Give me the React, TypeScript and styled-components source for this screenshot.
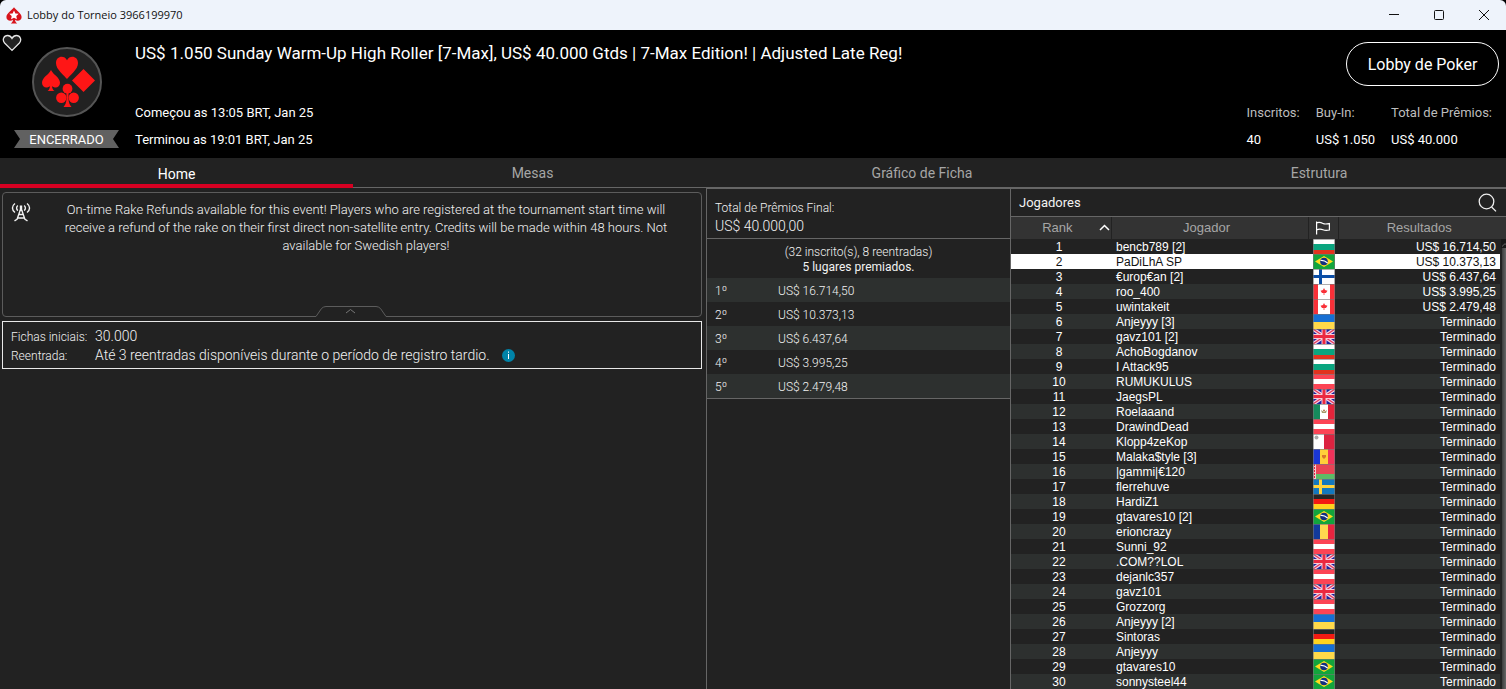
import React from "react";
import styled, { createGlobalStyle } from "styled-components";

const color = {
  panel: "#222222",
  alt: "#2d302f",
  head: "#333333",
  line: "#666666",
  text: "#f2f2f2",
  muted: "#a6a6a6",
  red: "#d70022",
};

const GlobalStyle = createGlobalStyle`
  * { box-sizing: border-box; }
  body {
    margin: 0;
    background: #000;
    color: ${color.text};
    font: 400 13px/18px Roboto, sans-serif;
  }
  button { font: inherit; color: inherit; background: none; border: 0; padding: 0; cursor: pointer; }
  h1, h2, p, dl, dd, dt { margin: 0; font-weight: inherit; }
  svg { display: block; }
`;

const Window = styled.div`
  display: flex;
  flex-direction: column;
  min-height: 100vh;
`;

/* Title bar */

const TitleBar = styled.div`
  display: flex;
  align-items: center;
  height: 30px;
  padding-left: 6px;
  gap: 5px;
  background: #eef3fb;
  color: #111;
  border-radius: 6px 6px 0 0;
  font-family: "Open Sans", "Noto Sans", sans-serif;
  font-size: 11px;
`;

const WindowButtons = styled.div`
  display: flex;
  margin-left: auto;
`;

const WindowButton = styled.button`
  display: flex;
  align-items: center;
  justify-content: center;
  width: 45px;
  height: 30px;
`;

/* Header */

const Header = styled.header`
  position: relative;
  display: flex;
  height: 128px;
  padding-bottom: 9px;
  background: #000;
`;

const Favourite = styled.button`
  position: absolute;
  left: 2px;
  top: 4px;
`;

const Brand = styled.div`
  display: flex;
  flex-direction: column;
  align-items: center;
  justify-content: space-between;
  width: 105px;
  margin: 0 16px 1px 14px;
  padding-top: 17px;
`;

const Ribbon = styled.div`
  width: 100%;
  padding-top: 2px;
  line-height: 16px;
  text-align: center;
  background: #616161;
  color: #fff;
  clip-path: polygon(0 0, 100% 0, calc(100% - 6px) 50%, 100% 100%, 0 100%, 6px 50%);
`;

const Info = styled.div`
  display: flex;
  flex-direction: column;
  flex: 1;
  justify-content: space-between;
  padding-top: 13px;
  color: #fff;
`;

const Title = styled.h1`
  font-size: 17px;
  line-height: 20px;
`;

const Times = styled.div`
  display: flex;
  flex-direction: column;
  gap: 9px;
`;

const HeaderSide = styled.div`
  display: flex;
  flex-direction: column;
  align-items: flex-end;
  justify-content: space-between;
  padding: 12px 7px 0 0;
`;

const LobbyButton = styled.button`
  width: 153px;
  height: 44px;
  padding-top: 2px;
  border: 1px solid #fff;
  border-radius: 22px;
  color: #fff;
  font-size: 16px;
`;

const Stats = styled.dl`
  display: flex;
  gap: 16px;
  padding-right: 7px;
`;

const Stat = styled.div`
  display: flex;
  flex-direction: column;
  gap: 9px;
  dt { color: #bdbdbd; }
  dd { color: #fff; }
`;

/* Tabs */

const Tabs = styled.nav`
  display: flex;
  height: 30px;
  background: ${color.panel};
`;

const Tab = styled.button<{ $share: number; $active?: boolean }>`
  flex: ${(p) => p.$share} 1 0;
  font-size: 14px;
  padding-top: ${(p) => (p.$active ? 6 : 1)}px;
  color: ${(p) => (p.$active ? "#fff" : color.muted)};
  border-bottom: ${(p) => (p.$active ? `4px solid ${color.red}` : `1px solid ${color.line}`)};
`;

/* Columns */

const Main = styled.main`
  display: grid;
  grid-template-columns: minmax(0, 706fr) minmax(0, 304fr) minmax(0, 496fr);
  flex: 1;
  background: ${color.panel};
`;

const Overview = styled.section`
  display: flex;
  flex-direction: column;
  gap: 4px;
  padding: 4px 4px 0 2px;
  font-weight: 300;
`;

const Notice = styled.div`
  position: relative;
  display: flex;
  height: 125px;
  padding: 8px 32px 0 8px;
  border: 1px solid #5c5c5c;
  border-radius: 4px;
`;

const NoticeText = styled.p`
  flex: 1;
  padding-left: 32px;
  text-align: center;
`;

const Collapse = styled.button`
  position: absolute;
  left: calc(50% - 37px);
  bottom: -1px;
`;

const Details = styled.dl`
  display: grid;
  grid-template-columns: 84px 1fr;
  align-items: center;
  padding: 5px 8px 3px;
  border: 1px solid #e8e8e8;
  dt { font-size: 12px; }
  dd { display: flex; align-items: center; gap: 12px; font-size: 14px; line-height: 19px; }
`;

const Prizes = styled.section`
  border-left: 1px solid ${color.line};
  border-top: 1px solid ${color.line};
  font-weight: 300;
  font-size: 12px;
`;

const PrizeTotal = styled.div`
  padding: 10px 8px 3px;
  border-bottom: 1px solid ${color.line};
  strong { display: block; font-size: 14px; font-weight: 300; }
`;

const Entries = styled.div`
  height: 39px;
  padding-top: 6px;
  line-height: 15px;
  text-align: center;
  strong { display: block; font-weight: 400; }
`;

const PrizeTable = styled.table`
  width: 100%;
  border-collapse: collapse;
  border-bottom: 1px solid ${color.line};
  tr { height: 24px; }
  tr:nth-child(odd) { background: ${color.alt}; }
  th { width: 71px; padding: 2px 8px 0; text-align: left; font-weight: 300; }
  td { padding: 2px 0 0; }
`;

const Players = styled.section`
  border-left: 1px solid ${color.line};
  border-top: 1px solid ${color.line};
`;

const PlayersHead = styled.div`
  display: flex;
  align-items: center;
  justify-content: space-between;
  height: 28px;
  padding: 0 9px 0 8px;
  border-bottom: 1px solid ${color.line};
`;

const PlayersTitle = styled.h2`
  padding-top: 1px;
  font-size: 13px;
`;

const PlayersBody = styled.div`
  display: flex;
`;

const PlayerTable = styled.table`
  flex: 1;
  table-layout: fixed;
  border-collapse: collapse;
  font-family: "Liberation Sans", Arial, sans-serif;
  font-size: 12px;
  line-height: 14px;
  color: #fff;
  thead { background: ${color.head}; color: ${color.muted}; font-size: 13px; }
  th { height: 22px; padding: 0 0 1px; font-weight: 400; }
  th + th { border-left: 1px solid ${color.panel}; }
  th:nth-child(2) { padding-right: 6px; }
  td { height: 15px; padding: 1px 0 0; text-align: center; white-space: nowrap; }
  td:nth-child(1) { padding-right: 4px; }
  td:nth-child(2) { padding-left: 5px; text-align: left; }
  td:nth-child(3) { padding: 0 0 0 5px; }
  td:nth-child(4) { padding-right: 4px; text-align: right; }
`;

const HeadCell = styled.div`
  display: flex;
  align-items: center;
  justify-content: center;
`;

const RankCell = styled(HeadCell)`
  justify-content: flex-end;
  gap: 26px;
  padding-right: 1px;
`;

const PlayerRow = styled.tr<{ $self: boolean }>`
  background: ${(p) => (p.$self ? "#fff" : color.panel)};
  color: ${(p) => (p.$self ? "#111" : "#fff")};
  &:nth-child(even) { background: ${(p) => (p.$self ? "#fff" : color.alt)}; }
`;

const Scrollbar = styled.div`
  display: flex;
  flex-direction: column;
  align-items: flex-end;
  width: 6px;
`;

const ScrollCap = styled.div`
  width: 100%;
  height: 22px;
  background: ${color.head};
`;

const ScrollArrow = styled.button`
  width: 5px;
  height: 9px;
  padding: 3px 0 0 1px;
  background: #181818;
`;

const ScrollThumb = styled.div`
  flex: 1;
  width: 4px;
  background: linear-gradient(90deg, #3c3c3c, #666);
`;

/* Drawings */

const SpadeLogo = () => (
  <svg width="16" height="17" viewBox="0 0 16 17">
    <path d="M8 0.3 C9.6 2.9 15.6 6.2 15.6 10 C15.6 14 11 14.6 9 12.7 C9.2 14.4 10 15.6 11.2 16.6 H4.8 C6 15.6 6.8 14.4 7 12.7 C5 14.6 .4 14 .4 10 C.4 6.2 6.4 2.9 8 .3Z" fill="#d8131b" />
    <path d="M8 3.400l1.400 3 3.300.4-2.400 2.300.6 3.200L8 10.800l-2.900 1.500.6-3.200-2.400-2.300 3.300-.4z" fill="#fff" />
  </svg>
);

const HeartIcon = () => (
  <svg width="20" height="18" viewBox="0 0 20 18">
    <path d="M10 16.4 L2.6 9 C-.2 5.6 2 1.5 5.6 1.5 C7.6 1.5 9 2.6 10 4.4 C11 2.6 12.4 1.5 14.4 1.5 C18 1.5 20.2 5.6 17.4 9Z" fill="#222" stroke="#e6e6e6" strokeWidth="1.3" />
  </svg>
);

const SuitsLogo = () => (
  <svg width="70" height="70" viewBox="32 47 70 70">
    <circle cx="67" cy="82" r="34" fill="#222" stroke="#555" strokeWidth="2" />
    <g fill="#ff1616">
      <path d="M67 79 C64.5 75.5 56 69.5 56 63.2 C56 55.6 64.5 55 67 60.2 C69.500 55 78 55.600 78 63.200 C78 69.500 69.500 75.500 67 79Z" />
      <path d="M83.500 69 L95 80.500 L83.500 92 L72 80.500Z" />
      <path d="M51 70 C53 74.500 60 77.500 60 82.800 C60 88 54.500 88.600 52 86 C52.200 88.600 53 90 54.500 91 H47.500 C49 90 49.800 88.600 50 86 C47.500 88.600 42 88 42 82.800 C42 77.500 49 74.500 51 70Z" />
      <circle cx="67.500" cy="88.700" r="4.900" />
      <circle cx="61.300" cy="97.700" r="5.200" />
      <circle cx="73.700" cy="97.700" r="5.200" />
      <path d="M66.300 91 H68.700 L68.400 98 C68.500 102.500 70 105.500 71.500 107 H63.500 C65 105.500 66.500 102.500 66.600 98Z" />
    </g>
  </svg>
);

const AntennaIcon = () => (
  <svg width="20" height="21" viewBox="0 -1 20 21" fill="none" stroke="#f2f2f2" strokeWidth="1.400">
    <path d="M4 1.500 C.6 4 .6 8 4 10.500 M16 1.500 C19.400 4 19.400 8 16 10.500 M6.800 3.500 C5.200 5 5.200 7.200 6.800 8.600 M13.200 3.500 C14.800 5 14.800 7.200 13.200 8.600" />
    <path d="M10 3.500 V9" strokeWidth="2.400" />
    <path d="M9.300 8 L6 17.500 M10.700 8 L14 17.500 M7.800 12.500 H12.200 M6.500 16 H13.500 M6.500 17 L3.500 18.800 M13.500 17 L16.500 18.800" />
  </svg>
);

const CollapseShape = () => (
  <svg width="72" height="12" viewBox="0 0 72 12" fill="none">
    <path d="M1 12 H71 V10 H1Z" fill="#222" />
    <path d="M0 11.500 H1 L6.500 3.500 Q8.500 1.500 11 1.500 H61 Q63.500 1.500 65.500 3.500 L71 11.500 H72" fill="#222" stroke="#5c5c5c" />
    <path d="M31 8 L35.500 4.500 L40 8" stroke="#777" />
  </svg>
);

const InfoIcon = () => (
  <svg width="13" height="13" viewBox="0 0 13 13">
    <circle cx="6.500" cy="6.500" r="6.500" fill="#0083a8" />
    <path d="M6 5 h1 v5 h-1z M6 2.600 h1 v1.200 h-1z" fill="#fff" />
  </svg>
);

const SearchIcon = () => (
  <svg width="19" height="20" viewBox="0 0 19 20" fill="none" stroke="#eee" strokeWidth="1.300">
    <circle cx="8.500" cy="8.500" r="7.300" />
    <path d="M13.600 14 L18 18.400" />
  </svg>
);

const FlagIcon = () => (
  <svg width="14" height="14" viewBox="0 0 14 14" fill="none" stroke="#fff" strokeWidth="1.200">
    <path d="M.6 .5 V13.500 M.5 2 C3 .8 5 1.500 7 2.500 S11 3 13.400 2.500 V9 C11 9.600 9 9.600 7 8.800 S3 7.800 .5 9" />
  </svg>
);

const stripes = (colors: string[], at: number[], vertical = false) =>
  colors.map((fill, i) => {
    const end = at[i + 1] ?? (vertical ? 22 : 15);
    return vertical ? (
      <rect key={i} x={at[i]} width={end - at[i]} height="15" fill={fill} />
    ) : (
      <rect key={i} y={at[i]} width="22" height={end - at[i]} fill={fill} />
    );
  });

const flagArt: Record<string, React.ReactNode> = {
  bg: stripes(["#fff", "#0aa57f", "#e2321e"], [0, 5, 11]),
  at: stripes(["#fc4455", "#fff", "#fc4455"], [0, 5, 10]),
  ua: stripes(["#176fd3", "#ffd94a"], [0, 8]),
  de: stripes(["#262626", "#f31a12", "#ffd31e"], [0, 5, 10]),
  ro: stripes(["#123a9c", "#ffd84f", "#e8243f"], [0, 7, 15], true),
  md: (
    <>
      {stripes(["#1a37d6", "#ffcf3a", "#f0325a"], [0, 7, 15], true)}
      <path d="M9 6 h4 v2 l-2 2 -2 -2z" fill="#d9742a" />
    </>
  ),
  mx: (
    <>
      {stripes(["#168a5c", "#fff", "#e3243b"], [0, 7, 15], true)}
      <path d="M8 6 L11 8 L14 6 L13 9 H9Z" fill="#a59b6a" />
      <circle cx="11" cy="6.500" r="1" fill="#b5764a" />
    </>
  ),
  mt: (
    <>
      {stripes(["#fff", "#dc2340"], [0, 11], true)}
      <circle cx="3.500" cy="3.500" r="2" fill="#aaa" />
    </>
  ),
  by: (
    <>
      {stripes(["#e84455", "#5dbb66"], [0, 10])}
      <rect width="3" height="15" fill="#f6c9cf" />
      <path d="M1.500 0 V15" stroke="#e0243c" strokeDasharray="2 1" />
    </>
  ),
  fi: (
    <>
      <rect width="22" height="15" fill="#fff" />
      <path d="M0 7.500 H22 M7.500 0 V15" stroke="#0b4ea6" strokeWidth="3" />
    </>
  ),
  se: (
    <>
      <rect width="22" height="15" fill="#1378be" />
      <path d="M0 7.500 H22 M7.500 0 V15" stroke="#ffd23c" strokeWidth="3" />
    </>
  ),
  ca: (
    <>
      {stripes(["#f93038", "#fff", "#f93038"], [0, 5, 17], true)}
      <path d="M11 4 L12 6 L14.500 6.800 L13 9 H11.400 V11 H10.600 V9 H9 L7.500 6.800 L10 6Z" fill="#f93038" />
    </>
  ),
  gb: (
    <>
      <rect width="22" height="15" fill="#1c22a0" />
      <path d="M0 0 L22 15 M22 0 L0 15" stroke="#f3d3e3" strokeWidth="3.600" />
      <path d="M0 0 L22 15 M22 0 L0 15" stroke="#e5365a" strokeWidth="1.200" />
      <path d="M0 7.500 H22 M11 0 V15" stroke="#f6cbd8" strokeWidth="5" />
      <path d="M0 7.500 H22 M11 0 V15" stroke="#ea2840" strokeWidth="3" />
    </>
  ),
  br: (
    <>
      <rect width="22" height="15" fill="#12a53c" />
      <path d="M11 2 L20 7.500 L11 13 L2 7.500Z" fill="#ffdc1e" />
      <circle cx="11" cy="7.500" r="3.800" fill="#133080" />
      <path d="M7.500 6.500 Q11 6 14.600 9" stroke="#fff" fill="none" strokeWidth="1.200" />
    </>
  ),
};

const Flag = ({ code }: { code: string }) => (
  <svg width="22" height="15" viewBox="0 0 22 15" role="img" aria-label={code}>
    {flagArt[code]}
    <path d="M0 .5 H22 M.5 0 V15 M21.500 0 V15" stroke="#777" strokeOpacity=".6" />
  </svg>
);

/* Data */

const prizes = ["16.714,50", "10.373,13", "6.437,64", "3.995,25", "2.479,48"];

const players: [string, string][] = [
  ["bencb789 [2]", "bg"],
  ["PaDiLhA SP", "br"],
  ["€urop€an [2]", "fi"],
  ["roo_400", "ca"],
  ["uwintakeit", "ca"],
  ["Anjeyyy [3]", "ua"],
  ["gavz101 [2]", "gb"],
  ["AchoBogdanov", "bg"],
  ["I Attack95", "bg"],
  ["RUMUKULUS", "at"],
  ["JaegsPL", "gb"],
  ["Roelaaand", "mx"],
  ["DrawindDead", "at"],
  ["Klopp4zeKop", "mt"],
  ["Malaka$tyle [3]", "md"],
  ["|gammi|€120", "by"],
  ["flerrehuve", "se"],
  ["HardiZ1", "de"],
  ["gtavares10 [2]", "br"],
  ["erioncrazy", "ro"],
  ["Sunni_92", "at"],
  [".COM??LOL", "gb"],
  ["dejanlc357", "at"],
  ["gavz101", "gb"],
  ["Grozzorg", "at"],
  ["Anjeyyy [2]", "ua"],
  ["Sintoras", "de"],
  ["Anjeyyy", "ua"],
  ["gtavares10", "br"],
  ["sonnysteel44", "br"],
];

export default function App() {
  return (
    <>
      <GlobalStyle />
      <Window>
        <TitleBar>
          <SpadeLogo />
          <span>Lobby do Torneio 3966199970</span>
          <WindowButtons>
            <WindowButton aria-label="Minimizar">
              <svg width="10" height="10" fill="none" stroke="#111"><path d="M0 4.500 H10" /></svg>
            </WindowButton>
            <WindowButton aria-label="Maximizar">
              <svg width="10" height="10" fill="none" stroke="#111"><rect x=".5" y=".5" width="9" height="9" rx="1" /></svg>
            </WindowButton>
            <WindowButton aria-label="Fechar">
              <svg width="10" height="10" fill="none" stroke="#111"><path d="M0 0 L10 10 M10 0 L0 10" /></svg>
            </WindowButton>
          </WindowButtons>
        </TitleBar>

        <Header>
          <Favourite aria-label="Favorito"><HeartIcon /></Favourite>
          <Brand>
            <SuitsLogo />
            <Ribbon>ENCERRADO</Ribbon>
          </Brand>
          <Info>
            <Title>US$ 1.050 Sunday Warm-Up High Roller [7-Max], US$ 40.000 Gtds | 7-Max Edition! | Adjusted Late Reg!</Title>
            <Times>
              <p>Começou as 13:05 BRT, Jan 25</p>
              <p>Terminou as 19:01 BRT, Jan 25</p>
            </Times>
          </Info>
          <HeaderSide>
            <LobbyButton>Lobby de Poker</LobbyButton>
            <Stats>
              <Stat><dt>Inscritos:</dt><dd>40</dd></Stat>
              <Stat><dt>Buy-In:</dt><dd>US$ 1.050</dd></Stat>
              <Stat><dt>Total de Prêmios:</dt><dd>US$ 40.000</dd></Stat>
            </Stats>
          </HeaderSide>
        </Header>

        <Tabs>
          <Tab $share={353} $active>Home</Tab>
          <Tab $share={359}>Mesas</Tab>
          <Tab $share={420}>Gráfico de Ficha</Tab>
          <Tab $share={374}>Estrutura</Tab>
        </Tabs>

        <Main>
          <Overview>
            <Notice>
              <AntennaIcon />
              <NoticeText>
                On-time Rake Refunds available for this event! Players who are registered at the tournament start time will receive a refund of the rake on their first direct non-satellite entry. Credits will be made within 48 hours. Not available for Swedish players!
              </NoticeText>
              <Collapse aria-label="Recolher"><CollapseShape /></Collapse>
            </Notice>
            <Details>
              <dt>Fichas iniciais:</dt>
              <dd>30.000</dd>
              <dt>Reentrada:</dt>
              <dd>Até 3 reentradas disponíveis durante o período de registro tardio. <InfoIcon /></dd>
            </Details>
          </Overview>

          <Prizes>
            <PrizeTotal>
              Total de Prêmios Final:
              <strong>US$ 40.000,00</strong>
            </PrizeTotal>
            <Entries>
              (32 inscrito(s), 8 reentradas)
              <strong>5 lugares premiados.</strong>
            </Entries>
            <PrizeTable>
              <tbody>
                {prizes.map((value, i) => (
                  <tr key={value}>
                    <th scope="row">{i + 1}º</th>
                    <td>US$ {value}</td>
                  </tr>
                ))}
              </tbody>
            </PrizeTable>
          </Prizes>

          <Players>
            <PlayersHead>
              <PlayersTitle>Jogadores</PlayersTitle>
              <button aria-label="Buscar"><SearchIcon /></button>
            </PlayersHead>
            <PlayersBody>
              <PlayerTable>
                <colgroup>
                  <col width="100" />
                  <col />
                  <col width="30" />
                  <col width="162" />
                </colgroup>
                <thead>
                  <tr>
                    <th>
                      <RankCell>
                        Rank
                        <svg width="11" height="7" fill="none" stroke="#fff" strokeWidth="1.500"><path d="M1 6 L5.500 1.500 L10 6" /></svg>
                      </RankCell>
                    </th>
                    <th>Jogador</th>
                    <th aria-label="País"><HeadCell><FlagIcon /></HeadCell></th>
                    <th>Resultados</th>
                  </tr>
                </thead>
                <tbody>
                  {players.map(([name, flag], i) => (
                    <PlayerRow key={name + i} $self={i === 1}>
                      <td>{i + 1}</td>
                      <td>{name}</td>
                      <td><Flag code={flag} /></td>
                      <td>{i < prizes.length ? `US$ ${prizes[i]}` : "Terminado"}</td>
                    </PlayerRow>
                  ))}
                </tbody>
              </PlayerTable>
              <Scrollbar>
                <ScrollCap />
                <ScrollArrow aria-label="Rolar para cima">
                  <svg width="4" height="4" fill="none" stroke="#666"><path d="M0 3.500 L3 .7 L4 1.500" /></svg>
                </ScrollArrow>
                <ScrollThumb />
              </Scrollbar>
            </PlayersBody>
          </Players>
        </Main>
      </Window>
    </>
  );
}
